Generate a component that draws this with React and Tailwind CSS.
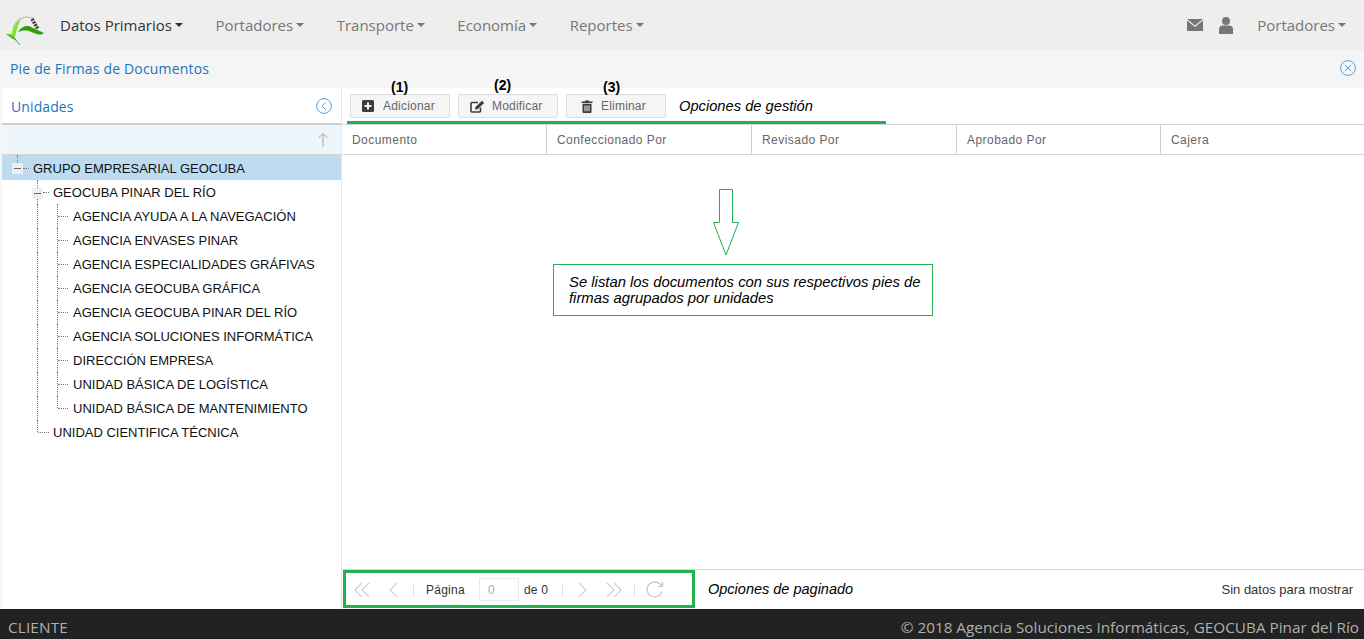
import React from "react";

const LOGO = (
  <svg width="42" height="42" viewBox="0 0 42 42" className="shrink-0">
    <path d="M11 24 C14 17 18 13.5 24 13 L31 14" fill="none" stroke="#c8c8c8" strokeWidth="1.6" />
    <path d="M4 30 L11 30.5 L15 37 C11 35 7 33 4 30Z" fill="#4ec41a" />
    <path d="M9.5 32 C10 24 14 18 19 15 C16 21 14.5 26 13.5 32Z" fill="#86e62c" />
    <path d="M16 28.5 C19 22.5 25 20.5 30 23.5 L42 29 C37 32.5 33 29 27 27 C23 26 19 26.5 16 28.5Z" fill="#2f9f10" />
    <path d="M30 15 L36 25" stroke="#3a3a3a" strokeWidth="3.5" strokeDasharray="2 1" fill="none" />
    <path d="M13 35 L18 41" stroke="#2aa58c" strokeWidth="1" />
  </svg>
);

function Caret() {
  return <span className="ml-[3px] inline-block align-middle w-0 h-0 border-x-[4px] border-x-transparent border-t-[4px] border-t-current" />;
}

function NavItem({ children, active }) {
  return (
    <span className={`flex items-center text-[15px] ${active ? "text-[#333333]" : "text-[#777777]"}`}>
      {children}
      <Caret />
    </span>
  );
}

function CircleIcon({ children }) {
  return (
    <svg width="16" height="16" viewBox="0 0 16 16" fill="none" stroke="#5a9fd6" strokeWidth="1">
      <circle cx="8" cy="8" r="7.4" />
      {children}
    </svg>
  );
}

function ToolButton({ icon, label, padClass, gapClass }) {
  return (
    <div className={`flex items-center w-[100px] h-6 border border-[#dddddd] rounded-[2px] bg-[#f5f5f5] ${padClass}`}>
      {icon}
      <span className={`text-[12px] text-[#666666] tracking-[0.2px] ${gapClass}`}>{label}</span>
    </div>
  );
}

function HeaderCell({ children, width }) {
  return (
    <div className={`flex items-center pl-[10px] h-full border-r border-[#d0d0d0] text-[12px] text-[#666666] tracking-[0.45px] ${width}`}>
      {children}
    </div>
  );
}

function Pager({ d }) {
  return (
    <svg width="22" height="20" viewBox="0 0 22 20" fill="none" stroke="#cfcfcf" strokeWidth="1.2">
      <path d={d} />
    </svg>
  );
}

function Sep() {
  return <span className="w-px h-[14px] bg-[#e0e0e0]" />;
}

const LEAVES = [
  "AGENCIA AYUDA A LA NAVEGACIÓN",
  "AGENCIA ENVASES PINAR",
  "AGENCIA ESPECIALIDADES GRÁFIVAS",
  "AGENCIA GEOCUBA GRÁFICA",
  "AGENCIA GEOCUBA PINAR DEL RÍO",
  "AGENCIA SOLUCIONES INFORMÁTICA",
  "DIRECCIÓN EMPRESA",
  "UNIDAD BÁSICA DE LOGÍSTICA",
  "UNIDAD BÁSICA DE MANTENIMIENTO",
];

function Minus() {
  return (
    <span className="flex items-center justify-center w-[11px] h-[11px] bg-[#eeeeee]">
      <span className="w-[7px] h-px bg-[#666666]" />
    </span>
  );
}

const DOTV = "border-l border-dotted border-[#777777]";
const DOTH = "border-t border-dotted border-[#777777]";

function TreeRow({ children, className = "" }) {
  return <div className={`relative flex items-center pt-[2px] text-[13px] text-[#111111] ${className}`}>{children}</div>;
}

export default function App() {
  return (
    <div className="relative w-[1364px] h-[639px] overflow-hidden flex flex-col bg-white font-['Liberation_Sans',sans-serif]">
      <header className="h-[50px] shrink-0 bg-[#eeeeee] flex items-center font-['Open_Sans',sans-serif]">
        <div className="w-[60px] pl-[2px] flex items-center">{LOGO}</div>
        <div className="flex gap-[32.5px]">
          <NavItem active>Datos Primarios</NavItem>
          <NavItem>Portadores</NavItem>
          <NavItem>Transporte</NavItem>
          <NavItem>Economía</NavItem>
          <NavItem>Reportes</NavItem>
        </div>
        <div className="ml-auto flex items-center pr-[18px]">
          <svg width="16" height="12" viewBox="0 0 16 12" fill="#777777">
            <path d="M0 0 H16 L8 6.5Z" />
            <path d="M0 1.6 V12 H16 V1.6 L8 8Z" />
          </svg>
          <svg width="14" height="17" viewBox="0 0 14 17" fill="#777777" className="ml-[16px]">
            <circle cx="7" cy="4" r="4" />
            <path d="M0 17 V12 C0 9.5 2 8.5 4 8.5 H10 C12 8.5 14 9.5 14 12 V17Z" />
          </svg>
          <span className="ml-[24px]"><NavItem>Portadores</NavItem></span>
        </div>
      </header>

      <div className="h-9 shrink-0 bg-[#f5f5f5] flex items-center justify-between pl-[10px] pr-2 text-[14px] text-[#1b75bb] font-['Open_Sans',sans-serif]">
        <span className="tracking-[0.17px]">Pie de Firmas de Documentos</span>
        <CircleIcon><path d="M5 5 L11 11 M11 5 L5 11" /></CircleIcon>
      </div>

      <main className="flex-1 min-h-0 flex pt-[2px] pl-[2px] bg-[#f5f5f5]">
        <aside className="w-[340px] shrink-0 flex flex-col bg-white border-r border-[#e6e6e6]">
          <div className="h-[37px] shrink-0 flex items-center justify-between pt-px pl-[9px] pr-[9px] border-b-2 border-[#cfcfcf] text-[14px] text-[#1b75bb] font-['Open_Sans',sans-serif]">
            <span className="tracking-[0.1px]">Unidades</span>
            <CircleIcon><path d="M9.5 4.5 L6 8 L9.5 11.5" /></CircleIcon>
          </div>
          <div className="h-[30px] shrink-0 flex items-center justify-end pr-[12px] bg-[#eef5fb] border-b border-[#d5d5d5]">
            <svg width="12" height="16" viewBox="0 0 12 16" fill="none" stroke="#a8a8a8" strokeWidth="1">
              <path d="M6 15 V1.5 M1.5 6 L6 1.5 L10.5 6" />
            </svg>
          </div>
          <div className="flex-1">
            <TreeRow className="h-[25px] bg-[#bddcf2] pl-[31px]">
              <span className={`absolute left-[15px] top-0 h-[8px] ${DOTV}`} />
              <span className="absolute left-[10px] top-[8px]"><Minus /></span>
              <span className={`absolute left-[21px] top-[13px] w-[6px] ${DOTH}`} />
              GRUPO EMPRESARIAL GEOCUBA
            </TreeRow>
            <TreeRow className="h-6 pl-[51px]">
              <span className={`absolute left-[35px] top-0 h-full ${DOTV}`} />
              <span className="absolute left-[30px] top-[8px]"><Minus /></span>
              <span className={`absolute left-[41px] top-[12px] w-[6px] ${DOTH}`} />
              GEOCUBA PINAR DEL RÍO
            </TreeRow>
            {LEAVES.map((t, i) => (
              <TreeRow key={t} className="h-6 pl-[71px]">
                <span className={`absolute left-[35px] top-0 h-full ${DOTV}`} />
                <span className={`absolute left-[55px] top-0 ${i === LEAVES.length - 1 ? "h-[12px]" : "h-full"} ${DOTV}`} />
                <span className={`absolute left-[56px] top-[12px] w-[10px] ${DOTH}`} />
                {t}
              </TreeRow>
            ))}
            <TreeRow className="h-6 pl-[51px]">
              <span className={`absolute left-[35px] top-0 h-[12px] ${DOTV}`} />
              <span className={`absolute left-[36px] top-[12px] w-[11px] ${DOTH}`} />
              UNIDAD CIENTIFICA TÉCNICA
            </TreeRow>
          </div>
        </aside>

        <section className="flex-1 min-w-0 flex flex-col bg-white">
          <div className="h-[37px] shrink-0 flex items-start pt-[6px] pl-[8px] gap-2 border-b border-[#d5d5d5]">
            <ToolButton
              padClass="pl-[11px]"
              gapClass="ml-[9px]"
              label="Adicionar"
              icon={
                <svg width="12" height="12" viewBox="0 0 12 12">
                  <path fillRule="evenodd" fill="#3c3c3c" d="M1.5 0 H10.5 A1.5 1.5 0 0 1 12 1.5 V10.5 A1.5 1.5 0 0 1 10.5 12 H1.5 A1.5 1.5 0 0 1 0 10.5 V1.5 A1.5 1.5 0 0 1 1.5 0Z M5 2.5 V5 H2.5 V7 H5 V9.5 H7 V7 H9.5 V5 H7 V2.5Z" />
                </svg>
              }
            />
            <ToolButton
              padClass="pl-[11px]"
              gapClass="ml-[7px]"
              label="Modificar"
              icon={
                <svg width="15" height="13" viewBox="0 0 15 13" fill="none" stroke="#3c3c3c">
                  <path d="M10.5 7.5 V11 A1 1 0 0 1 9.5 12 H2 A1 1 0 0 1 1 11 V3.5 A1 1 0 0 1 2 2.5 H8" strokeWidth="1.6" />
                  <path d="M5 9.5 L5.5 7 L12 0.8 L14.2 3 L7.6 9.2Z" fill="#3c3c3c" stroke="none" />
                </svg>
              }
            />
            <ToolButton
              padClass="pl-[14px]"
              gapClass="ml-[8px]"
              label="Eliminar"
              icon={
                <svg width="12" height="13" viewBox="0 0 12 13" fill="#3c3c3c">
                  <path d="M0.5 1.5 H4 V0.5 H8 V1.5 H11.5 V3 H0.5Z" />
                  <path fillRule="evenodd" d="M1.5 3.8 H10.5 V12 A1 1 0 0 1 9.5 13 H2.5 A1 1 0 0 1 1.5 12Z M3.5 5.5 V11.3 H4.5 V5.5Z M5.5 5.5 V11.3 H6.5 V5.5Z M7.5 5.5 V11.3 H8.5 V5.5Z" />
                </svg>
              }
            />
            <span className="ml-[5px] mt-px text-[14.7px] italic text-black">Opciones de gestión</span>
          </div>
          <div className="h-[30px] shrink-0 flex border-b border-[#d5d5d5]">
            <HeaderCell width="w-[205px]">Documento</HeaderCell>
            <HeaderCell width="w-[205px]">Confeccionado Por</HeaderCell>
            <HeaderCell width="w-[205px]">Revisado Por</HeaderCell>
            <HeaderCell width="w-[204px]">Aprobado Por</HeaderCell>
            <div className="flex items-center pl-[10px] text-[12px] text-[#666666] tracking-[0.45px]">Cajera</div>
          </div>
          <div className="flex-1" />
          <div className="h-[40px] shrink-0 flex items-center border-t border-[#d5d5d5] text-[12px] text-[#333333]">
            <div className="w-[366px] pl-[10px] flex items-center">
              <Pager d="M10 3 L3 10 L10 17 M17 3 L10 10 L17 17" />
              <span className="w-[10px]" />
              <Pager d="M13 3 L6 10 L13 17" />
              <span className="w-[7px]" />
              <Sep />
              <span className="ml-3 tracking-[0.25px]">Página</span>
              <span className="ml-[14px] w-10 h-[23px] border border-[#e8e8e8] flex items-center pl-2 text-[#aaaaaa]">0</span>
              <span className="ml-[5px] tracking-[0.25px]">de 0</span>
              <span className="w-[14px]" />
              <Sep />
              <span className="w-[9px]" />
              <Pager d="M7 3 L14 10 L7 17" />
              <span className="w-[9px]" />
              <Pager d="M4 3 L11 10 L4 17 M11 3 L18 10 L11 17" />
              <span className="w-[9px]" />
              <Sep />
              <svg width="18" height="18" viewBox="0 0 18 18" fill="none" stroke="#c4c4c4" strokeWidth="1.2" className="ml-[11px]">
                <path d="M15.8 10.5 A7.5 7.5 0 1 1 13.5 2.8 L16 5" />
                <path d="M16.5 1 V5.5 H12" />
              </svg>
            </div>
            <span className="text-[14.5px] italic text-black">Opciones de paginado</span>
            <span className="ml-auto pr-[11px] text-[13px]">Sin datos para mostrar</span>
          </div>
        </section>
      </main>

      <footer className="h-[30px] shrink-0 bg-[#222222] flex items-end justify-between pl-2 pr-[5px] text-[15.3px] text-[#b0b0b0] font-['Open_Sans',sans-serif]">
        <span className="tracking-[0.15px]">CLIENTE</span>
        <span>© 2018 Agencia Soluciones Informáticas, GEOCUBA Pinar del Río</span>
      </footer>

      {/* annotations drawn over the screenshot */}
      <span className="absolute left-[391px] top-[77px] text-[14px] font-bold text-black">(1)</span>
      <span className="absolute left-[494px] top-[75px] text-[14px] font-bold text-black">(2)</span>
      <span className="absolute left-[603px] top-[77px] text-[14px] font-bold text-black">(3)</span>
      <div className="absolute left-[347px] top-[121px] w-[539px] h-[3px] bg-[#22b14c]" />
      <svg className="absolute left-[712px] top-[188px]" width="28" height="70" viewBox="0 0 28 70" fill="none" stroke="#22b14c">
        <path d="M7.5 1.5 H20.5 V34.5 H26.5 L14 67 L1.5 34.5 H7.5Z" />
      </svg>
      <div className="absolute left-[553px] top-[264px] w-[380px] h-[52px] border border-[#22b14c] bg-white pl-[15px] pt-[9px] text-[14.85px] leading-[16px] italic text-black">
        Se listan los documentos con sus respectivos pies de firmas agrupados por unidades
      </div>
      <div className="absolute left-[343px] top-[570px] w-[352px] h-[38px] border-[3px] border-[#22b14c]" />
    </div>
  );
}
